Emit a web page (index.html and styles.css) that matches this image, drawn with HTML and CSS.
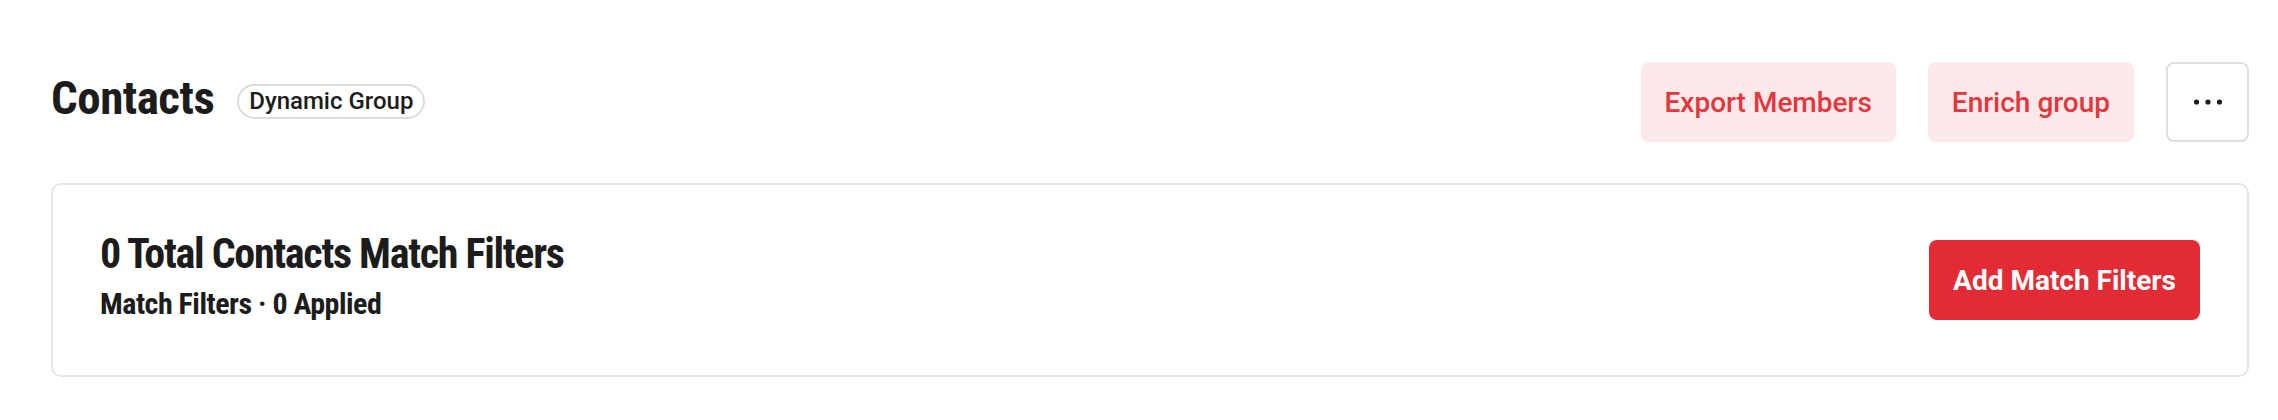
FILE: index.html
```html
<!DOCTYPE html>
<html lang="en">
<head>
    <meta charset="UTF-8">
    <meta name="viewport" content="width=device-width, initial-scale=1.0">
    <title>Contacts</title>
    <link rel="stylesheet" href="styles.css">
</head>
<body>
    <main class="page">
        <header class="page-head">
            <div class="title-wrap">
                <h1 class="page-title">Contacts</h1>
                <span class="badge">Dynamic Group</span>
            </div>
            <div class="actions">
                <button class="btn btn-soft">Export Members</button>
                <button class="btn btn-soft">Enrich group</button>
                <button class="btn btn-more" aria-label="More">
                    <svg width="30" height="8" viewBox="0 0 30 8">
                        <circle cx="3.5" cy="4" r="2.6" fill="#1c1c1c"/>
                        <circle cx="15" cy="4" r="2.6" fill="#1c1c1c"/>
                        <circle cx="26.5" cy="4" r="2.6" fill="#1c1c1c"/>
                    </svg>
                </button>
            </div>
        </header>

        <section class="card">
            <div class="card-text">
                <h2 class="card-title">0 Total Contacts Match Filters</h2>
                <p class="card-sub">Match Filters · 0 Applied</p>
            </div>
            <button class="btn btn-primary">Add Match Filters</button>
        </section>
    </main>
</body>
</html>
```

FILE: styles.css
```css
body {
    margin: 0;
    background-color: #ffffff;
    font-family: Roboto, "Liberation Sans", sans-serif;
    color: #1c1c1c;
}
.page {
    padding: 62px 29px 0 51px;
}
.page-head {
    display: flex;
    justify-content: space-between;
    align-items: flex-start;
}
.title-wrap {
    display: flex;
    align-items: center;
    gap: 23px;
    padding-top: 12px;
}
.page-title, .card-title, .card-sub {
    font-family: "Liberation Sans Narrow", "Roboto Condensed", "DejaVu Sans Condensed", sans-serif;
    font-weight: 700;
    margin: 0;
    color: #1c1c1c;
}
.page-title {
    font-size: 47px;
    line-height: 1;
    letter-spacing: -0.5px;
}
.badge {
    font-size: 24px;
    font-weight: 500;
    line-height: 31px;
    padding: 0 10px;
    border: 2px solid #dcdcdc;
    border-radius: 20px;
    color: #1c1c1c;
    margin-top: 8px;
}
.actions {
    display: flex;
    gap: 32px;
}
.btn {
    font-family: Roboto, "Liberation Sans", sans-serif;
    font-size: 28px;
    height: 80px;
    padding: 0 24px;
    border: none;
    border-radius: 8px;
    cursor: pointer;
}
.btn-soft {
    background-color: #fde9e9;
    color: #e4363d;
    font-weight: 500;
}
.btn-more {
    width: 83px;
    padding: 0;
    background: #ffffff;
    border: 2px solid #e0e0e0;
    display: flex;
    align-items: center;
    justify-content: center;
}
.btn-primary {
    background-color: #e22b35;
    color: #ffffff;
    font-weight: 700;
}
.card {
    margin-top: 41px;
    height: 190px;
    border: 2px solid #e6e6e6;
    border-radius: 10px;
    display: flex;
    align-items: center;
    justify-content: space-between;
    padding: 0 47px;
}
.card-text {
    padding-bottom: 9px;
}
.card-title {
    font-size: 42px;
    line-height: 1;
    letter-spacing: -1.3px;
}
.card-sub {
    font-size: 30px;
    line-height: 1;
    margin-top: 14px;
    letter-spacing: -0.5px;
}
```
